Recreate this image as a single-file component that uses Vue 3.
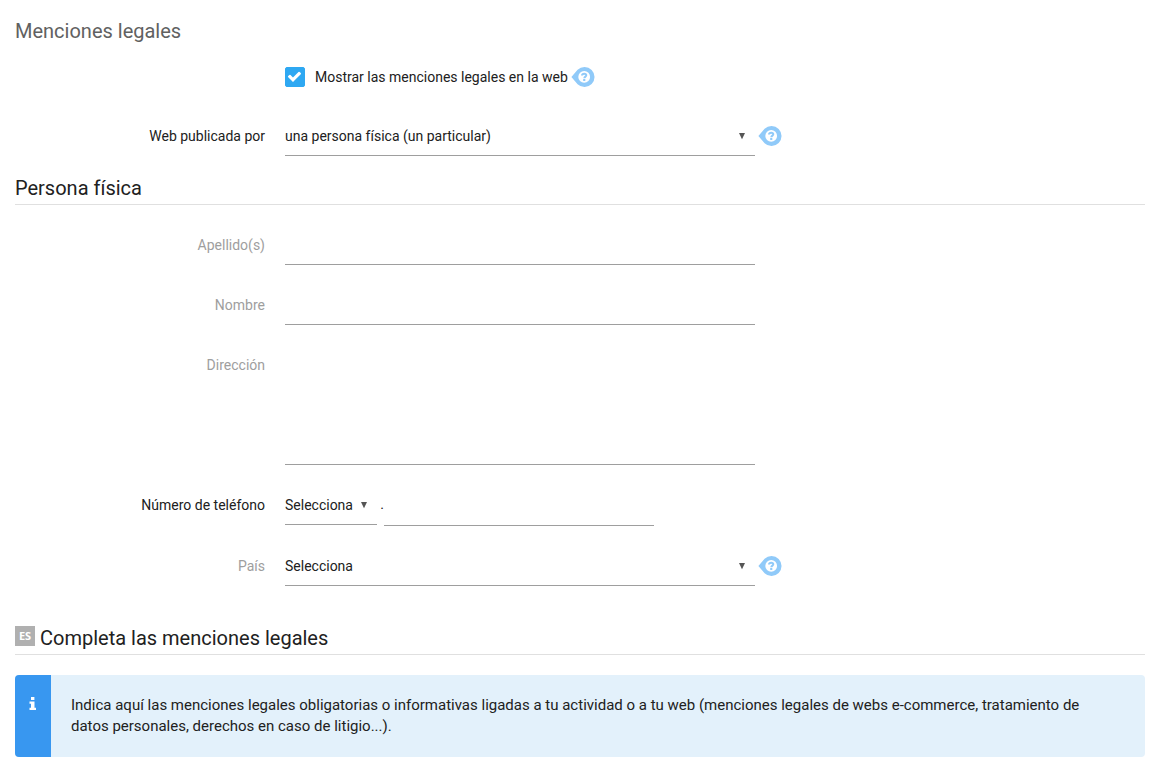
<script setup>
import { ref, reactive } from 'vue'

const showLegal = ref(true)
const form = reactive({
  publisher: 'person',
  lastName: '',
  firstName: '',
  address: '',
  prefix: '',
  phone: '',
  country: ''
})
</script>

<template>
  <svg class="sprite" aria-hidden="true">
    <symbol id="help-drop" viewBox="0 0 24 20">
      <path fill="#90caf9" d="M0.4 10 L6.6 2.8 A10 10 0 1 1 6.6 17.2 Z" />
      <circle cx="13.2" cy="9.9" r="5.9" fill="#fff" />
      <path fill="none" stroke="#90caf9" stroke-width="2" d="M11 8.5 C11.1 7.1 12 6.7 13.2 6.7 C14.5 6.7 15.3 7.4 15.3 8.3 C15.3 9.6 13.3 9.7 13.3 11.3" />
      <rect x="12.2" y="12" width="2.1" height="2" fill="#90caf9" />
    </symbol>
    <symbol id="caret" viewBox="0 0 8 8">
      <path fill="#555" d="M1 1 H7 L4 7.2 Z" />
    </symbol>
  </svg>

  <main class="page">
    <form @submit.prevent>
      <h1>Menciones legales</h1>

      <div class="row check-row">
        <div class="field">
          <label class="check">
            <input v-model="showLegal" type="checkbox" />
            <svg class="tick" viewBox="-236 -222 2384 2384" aria-hidden="true">
              <path fill="#fff" d="M1671 566q0 40-28 68l-724 724-136 136q-28 28-68 28t-68-28l-136-136-362-362q-28-28-28-68t28-68l136-136q28-28 68-28t68 28l294 295 656-657q28-28 68-28t68 28l136 136q28 28 28 68z" />
            </svg>
            <span>Mostrar las menciones legales en la web</span>
          </label>
          <button class="help" type="button" aria-label="Ayuda"><svg><use href="#help-drop" /></svg></button>
        </div>
      </div>

      <div class="row">
        <label for="publisher">Web publicada por</label>
        <div class="field">
          <div class="select wide">
            <select id="publisher" v-model="form.publisher">
              <option value="person">una persona física (un particular)</option>
            </select>
            <svg class="caret"><use href="#caret" /></svg>
          </div>
          <button class="help" type="button" aria-label="Ayuda"><svg><use href="#help-drop" /></svg></button>
        </div>
      </div>

      <h2>Persona física</h2>

      <div class="row muted">
        <label for="lastName">Apellido(s)</label>
        <div class="field"><input id="lastName" v-model="form.lastName" class="wide" type="text" /></div>
      </div>
      <div class="row muted">
        <label for="firstName">Nombre</label>
        <div class="field"><input id="firstName" v-model="form.firstName" class="wide" type="text" /></div>
      </div>
      <div class="row muted">
        <label for="address">Dirección</label>
        <div class="field"><textarea id="address" v-model="form.address" class="wide"></textarea></div>
      </div>
      <div class="row">
        <label for="phone">Número de teléfono</label>
        <div class="field">
          <div class="select prefix">
            <select v-model="form.prefix" aria-label="Prefijo">
              <option value="">Selecciona</option>
            </select>
            <svg class="caret"><use href="#caret" /></svg>
          </div>
          <span class="dot">.</span>
          <input id="phone" v-model="form.phone" class="phone" type="tel" />
        </div>
      </div>
      <div class="row muted">
        <label for="country">País</label>
        <div class="field">
          <div class="select wide">
            <select id="country" v-model="form.country">
              <option value="">Selecciona</option>
            </select>
            <svg class="caret"><use href="#caret" /></svg>
          </div>
          <button class="help" type="button" aria-label="Ayuda"><svg><use href="#help-drop" /></svg></button>
        </div>
      </div>

      <h2 class="complete"><span class="lang">ES</span>Completa las menciones legales</h2>

      <div class="notice">
        <div class="notice-icon">
          <svg viewBox="0 0 8 13" aria-hidden="true">
            <path fill="#fff" d="M2 0 H5.4 V3 H2 Z M0.5 4.6 H5.5 V10.8 H7 V13 H0.5 V10.8 H2 V6.8 H0.5 Z" />
          </svg>
        </div>
        <p>Indica aquí las menciones legales obligatorias o informativas ligadas a tu actividad o a tu web (menciones legales de webs e-commerce, tratamiento de datos personales, derechos en caso de litigio...).</p>
      </div>
    </form>
  </main>
</template>

<style>
body {
  background: #fff;
}
</style>

<style scoped>
.sprite {
  position: absolute;
  width: 0;
  height: 0;
}
.page {
  padding: 19px 10px 7px 15px;
  color: #212121;
  font: 14px/20px Roboto, "Liberation Sans", sans-serif;
}
h1,
h2 {
  margin: 0;
  font-size: 20px;
  font-weight: 400;
  line-height: 24px;
}
h1 {
  margin-bottom: 14px;
  color: #616161;
}
h2 {
  margin: 20px 0;
  padding-bottom: 4px;
  border-bottom: 1px solid #e0e0e0;
}
.row {
  display: grid;
  grid-template-columns: 250px minmax(0, 1fr);
  column-gap: 20px;
  margin-bottom: 20px;
}
.row > label {
  padding-top: 10px;
  text-align: right;
}
.muted > label {
  color: #9e9e9e;
}
.field {
  display: flex;
  align-items: center;
}
.check-row {
  margin-bottom: 19px;
}
.check-row .field {
  grid-column: 2;
  height: 40px;
}
.check {
  position: relative;
  display: flex;
  align-items: center;
  gap: 10px;
}
.check input {
  appearance: none;
  width: 20px;
  height: 20px;
  margin: 0;
  border: 1px solid #9e9e9e;
  border-radius: 2px;
}
.check input:checked {
  border-color: #2ea8f2;
  background: #2ea8f2;
}
.tick {
  position: absolute;
  left: 0;
  width: 20px;
  height: 20px;
  pointer-events: none;
}
.help {
  flex: none;
  height: 20px;
  margin-left: 3px;
  padding: 0;
  border: 0;
  background: none;
  cursor: pointer;
}
.help svg {
  display: block;
  width: 24px;
  height: 20px;
}
.wide {
  flex: 0 1 470px;
  min-width: 0;
}
input[type="text"],
input[type="tel"],
textarea,
select {
  box-sizing: border-box;
  height: 40px;
  margin: 0;
  padding: 0;
  border: 0;
  border-bottom: 1px solid #9e9e9e;
  border-radius: 0;
  outline: 0;
  background: transparent;
  color: #212121;
  font: inherit;
}
textarea {
  display: block;
  height: 120px;
  resize: none;
}
.select {
  position: relative;
}
select {
  appearance: none;
  display: block;
  width: 100%;
}
.caret {
  position: absolute;
  top: 16px;
  right: 9px;
  width: 8px;
  height: 8px;
  pointer-events: none;
}
.prefix {
  flex: none;
  width: 92px;
  margin-bottom: 1px;
}
.dot {
  width: 7px;
  margin-bottom: 4px;
  text-align: right;
}
input.phone {
  flex: 0 1 270px;
  min-width: 0;
  height: 41px;
}
.complete {
  display: flex;
  align-items: center;
  gap: 5px;
  margin-top: 40px;
}
.lang {
  width: 20px;
  height: 20px;
  margin-bottom: 4px;
  background: #b0b0b0;
  color: #fff;
  font: 700 11px/19px "Open Sans", sans-serif;
  text-align: center;
}
.notice {
  display: flex;
  overflow: hidden;
  border-radius: 4px;
  background: #e3f1fb;
}
.notice-icon {
  flex: none;
  width: 36px;
  padding-top: 22px;
  background: #3897f0;
}
.notice-icon svg {
  display: block;
  width: 8px;
  height: 13px;
  margin: 0 auto;
}
.notice p {
  margin: 0;
  padding: 20px 30px 20px 20px;
  font-size: 15px;
  line-height: 21px;
}
</style>
